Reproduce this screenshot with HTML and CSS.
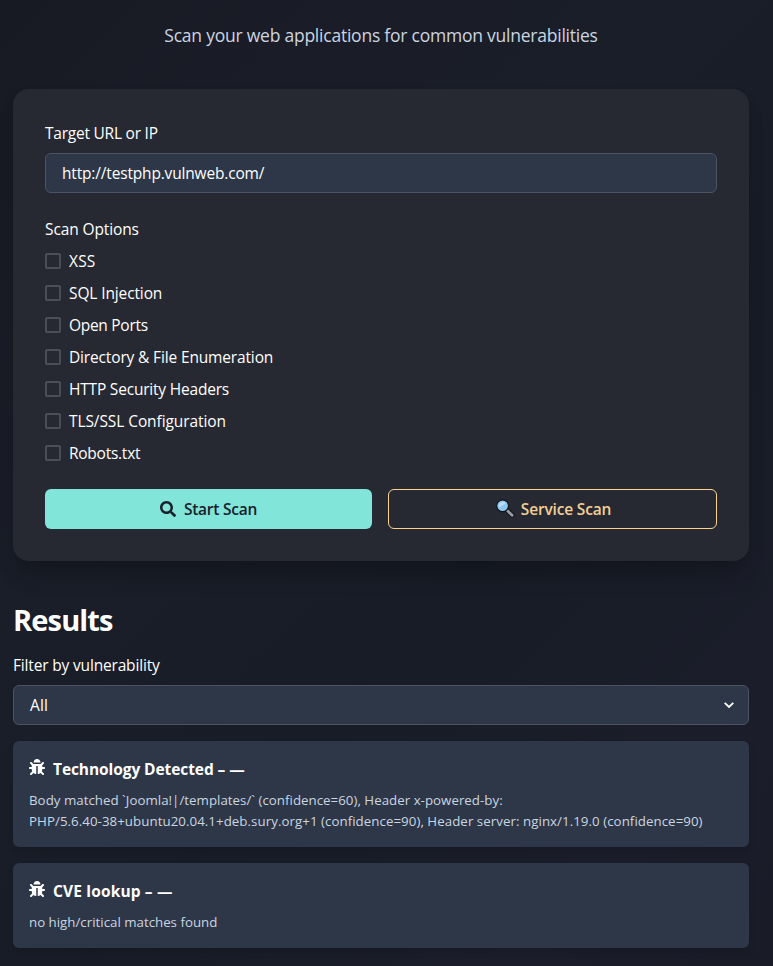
FILE: index.html
```
<!DOCTYPE html>
<html lang="en">
<head>
<meta charset="utf-8">
<title>Vulnerability Scanner</title>
<link rel="stylesheet" href="styles.css">
</head>
<body>
<svg class="sprite" aria-hidden="true">
  <symbol id="bug" viewBox="0 0 512 512"><path fill="currentColor" d="M511.988 288.9c-.478 17.43-15.217 31.1-32.653 31.1H424v16c0 21.864-4.882 42.584-13.6 61.145l60.228 60.228c12.496 12.497 12.496 32.758 0 45.255-12.498 12.497-32.759 12.496-45.256 0l-54.736-54.736C345.886 467.965 314.351 480 280 480V236c0-6.627-5.373-12-12-12h-24c-6.627 0-12 5.373-12 12v244c-34.351 0-65.886-12.035-90.636-32.108l-54.736 54.736c-12.498 12.497-32.759 12.496-45.256 0-12.496-12.497-12.496-32.758 0-45.255l60.228-60.228C92.882 378.584 88 357.864 88 336v-16H32.666C15.23 320 .491 306.33.013 288.9-.484 270.816 14.028 256 32 256h56v-58.745l-46.628-46.628c-12.496-12.497-12.496-32.758 0-45.255 12.498-12.497 32.758-12.497 45.256 0L141.255 160h229.489l54.627-54.627c12.498-12.497 32.758-12.497 45.256 0 12.496 12.497 12.496 32.758 0 45.255L424 197.255V256h56c17.972 0 32.484 14.816 31.988 32.9zM257 0c-61.856 0-112 50.144-112 112h224C369 50.144 318.856 0 257 0z"/></symbol>
</svg>
<main class="page">
  <p class="subtitle">Scan your web applications for common vulnerabilities</p>
  <section class="card">
    <p class="label t-target">Target URL or IP</p>
    <div class="field"><span class="t-url">http://testphp.vulnweb.com/</span></div>
    <p class="label options-label t-options">Scan Options</p>
    <div class="options">
      <label class="option"><span class="box"></span><span class="t-xss">XSS</span></label>
      <label class="option"><span class="box"></span><span class="t-sql">SQL Injection</span></label>
      <label class="option"><span class="box"></span><span class="t-ports">Open Ports</span></label>
      <label class="option"><span class="box"></span><span class="t-dir">Directory &amp; File Enumeration</span></label>
      <label class="option"><span class="box"></span><span class="t-http">HTTP Security Headers</span></label>
      <label class="option"><span class="box"></span><span class="t-tls">TLS/SSL Configuration</span></label>
      <label class="option"><span class="box"></span><span class="t-robots">Robots.txt</span></label>
    </div>
    <div class="actions">
      <button class="btn primary">
        <svg class="icon" viewBox="0 0 512 512"><path fill="currentColor" d="M505 442.7L405.3 343c-4.5-4.5-10.6-7-17-7H372c27.6-35.3 44-79.7 44-128C416 93.1 322.9 0 208 0S0 93.1 0 208s93.1 208 208 208c48.3 0 92.7-16.4 128-44v16.3c0 6.4 2.5 12.5 7 17l99.7 99.7c9.4 9.4 24.6 9.4 33.9 0l28.3-28.3c9.4-9.4 9.4-24.6.1-34zM208 336c-70.7 0-128-57.2-128-128 0-70.7 57.2-128 128-128 70.7 0 128 57.2 128 128 0 70.7-57.2 128-128 128z"/></svg>
        <span class="t-start">Start Scan</span>
      </button>
      <button class="btn outline">
        <svg class="lens" viewBox="0 0 20 20">
          <path d="M12 11.2l5.2 5" stroke="#11141b" stroke-width="4.8" stroke-linecap="round"/>
          <path d="M12.3 11.6l4.8 4.6" stroke="#9a9ca3" stroke-width="2.8" stroke-linecap="round"/>
          <circle cx="7.6" cy="6.8" r="5.9" fill="#8fc8ee" stroke="#11141b" stroke-width="1.2"/>
          <path d="M4 8.5A4.2 4.2 0 0 1 8.5 3l2.5 1z" fill="#b9def5"/>
        </svg>
        <span class="t-service">Service Scan</span>
      </button>
    </div>
  </section>
  <section class="results">
    <h2 class="heading">Results</h2>
    <p class="label t-filter">Filter by vulnerability</p>
    <div class="field select">
      <span class="t-all">All</span>
      <svg class="chevron" viewBox="0 0 12 8"><path d="M1.7 1.8L6 5.9l4.3-4.1" fill="none" stroke="currentColor" stroke-width="1.8"/></svg>
    </div>
    <article class="result">
      <h3 class="result-title"><svg class="bug"><use href="#bug"/></svg><span class="t-tech">Technology Detected – —</span></h3>
      <p class="detail"><span class="t-l1">Body matched `Joomla!|/templates/` (confidence=60), Header x-powered-by:</span><br><span class="t-l2">PHP/5.6.40-38+ubuntu20.04.1+deb.sury.org+1 (confidence=90), Header server: nginx/1.19.0 (confidence=90)</span></p>
    </article>
    <article class="result">
      <h3 class="result-title"><svg class="bug"><use href="#bug"/></svg><span class="t-cve">CVE lookup – —</span></h3>
      <p class="detail"><span class="t-none">no high/critical matches found</span></p>
    </article>
  </section>
</main>
</body>
</html>
```
FILE: styles.css
```
* { box-sizing: border-box; margin: 0; padding: 0; }
html { height: 966px; overflow: hidden; }
body {
  height: 966px;
  font: 15.5px/24px "Open Sans", "Noto Sans", sans-serif;
  letter-spacing: -.17px;
  color: #fff;
  background: linear-gradient(135deg, #171923 0%, #1a1c27 20%, #191e28 38%, #171c26 60%, #1b1e2a 85%, #191c27 100%);
}
.sprite { position: absolute; width: 0; height: 0; }
.page { width: 773px; padding: 22px 24px 0 13px; }
.subtitle {
  height: 27px; line-height: 27px; font-size: 17.5px; letter-spacing: -.23px; text-align: center;
  color: #cbd5e0; white-space: nowrap; margin-bottom: 40px;
}
.card {
  padding: 32px; border-radius: 16px; background: #272932;
  box-shadow: 0 20px 25px -5px rgba(0, 0, 0, .1), 0 10px 20px -5px rgba(0, 0, 0, .2);
}
.label { margin-bottom: 8px; }
.field {
  height: 40px; padding: 0 16px; display: flex; align-items: center;
  border: 1px solid #4c5362; border-radius: 6px; background: #2d3748;
}
.options-label { margin-top: 24px; }
.options { display: flex; flex-direction: column; gap: 8px; }
.option { display: flex; align-items: center; gap: 8px; height: 24px; }
.box { width: 16px; height: 16px; border: 2px solid #4b4d57; border-radius: 2px; }
.actions { display: grid; grid-template-columns: 327px 329px; gap: 16px; margin-top: 24px; }
.btn {
  height: 40px; display: flex; align-items: center; justify-content: center; gap: 8px;
  font: 600 15.5px/24px "Open Sans", sans-serif; border: 0; border-radius: 6px;
}
.primary { background: #81e6d9; color: #1a202c; }
.outline { background: transparent; color: #f2cf96; border: 1px solid #fbd38d; }
.icon, .bug { width: 16px; height: 16px; }
.lens { width: 20px; height: 20px; margin: 0 -2px 0 1px; }
.results { margin-top: 41px; }
.heading { font-size: 29px; line-height: 36px; font-weight: 700; letter-spacing: -.85px; color: #fff; margin-bottom: 15px; }
.select { justify-content: space-between; margin-bottom: 16px; padding-right: 13px; }
.chevron { width: 12px; height: 8px; }
.result {
  padding: 16px; border-radius: 6px; background: #2d3748; margin-bottom: 16px;
  box-shadow: 0 4px 6px rgba(0, 0, 0, .1);
}
.result-title {
  display: flex; gap: 8px; font-size: 15.5px; line-height: 24px; font-weight: 700;
  color: #fff; margin-bottom: 9px; white-space: nowrap;
}
.bug { margin-top: 2px; }
.detail { font-size: 13.3px; line-height: 21px; letter-spacing: 0; color: #cbd5e0; white-space: nowrap; margin-bottom: -1px; }

/* optical tracking per string */
.t-target { letter-spacing: -.23px; }
.t-options { letter-spacing: -.12px; }
.t-xss { letter-spacing: .2px; }
.t-sql { letter-spacing: -.12px; }
.t-ports { letter-spacing: -.29px; }
.t-dir { letter-spacing: -.15px; }
.t-http { letter-spacing: -.2px; }
.t-tls { letter-spacing: -.09px; }
.t-robots { letter-spacing: -.26px; }
.t-all { letter-spacing: .1px; }
.t-start { letter-spacing: -.24px; }
.t-service { letter-spacing: -.17px; }
.t-tech { letter-spacing: -.08px; }
.t-cve { letter-spacing: .15px; }
.t-l1 { letter-spacing: .02px; }
.t-l2 { letter-spacing: .05px; }
```
